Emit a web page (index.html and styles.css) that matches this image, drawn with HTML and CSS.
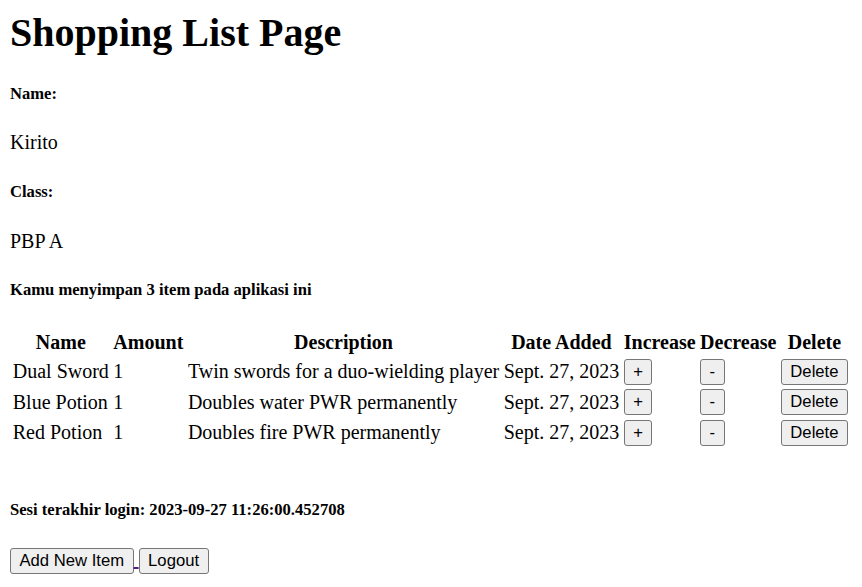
FILE: index.html
```html
<!DOCTYPE html>
<html>
<head>
<meta charset="utf-8">
<title>Shopping List Page</title>
<link rel="stylesheet" href="styles.css">
</head>
<body>
<h1 class="title">Shopping List Page</h1>
<h5 class="label">Name:</h5>
<p class="value">Kirito</p>
<h5 class="label">Class:</h5>
<p class="value">PBP A</p>
<h5 class="label">Kamu menyimpan 3 item pada aplikasi ini</h5>
<table class="items">
<tr>
<th>Name</th>
<th>Amount</th>
<th>Description</th>
<th>Date Added</th>
<th>Increase</th>
<th>Decrease</th>
<th>Delete</th>
</tr>
<tr>
<td>Dual Sword</td>
<td>1</td>
<td>Twin swords for a duo-wielding player</td>
<td>Sept. 27, 2023</td>
<td><button class="btn">+</button></td>
<td><button class="btn">-</button></td>
<td><button class="btn">Delete</button></td>
</tr>
<tr>
<td>Blue Potion</td>
<td>1</td>
<td>Doubles water PWR permanently</td>
<td>Sept. 27, 2023</td>
<td><button class="btn">+</button></td>
<td><button class="btn">-</button></td>
<td><button class="btn">Delete</button></td>
</tr>
<tr>
<td>Red Potion</td>
<td>1</td>
<td>Doubles fire PWR permanently</td>
<td>Sept. 27, 2023</td>
<td><button class="btn">+</button></td>
<td><button class="btn">-</button></td>
<td><button class="btn">Delete</button></td>
</tr>
</table>
<br>
<h5 class="label">Sesi terakhir login: 2023-09-27 11:26:00.452708</h5>
<a class="link" href="#"><button class="btn">Add New Item</button> </a><a class="link" href="#"><button class="btn">Logout</button></a>
</body>
</html>
```
FILE: styles.css
```css
html {
  background: #fff;
}
body {
  margin: 0 10px;
  font-family: "Liberation Serif", "Times New Roman", serif;
  font-size: 20px;
  color: #000;
}
.title {
  font-size: 40px;
  font-weight: bold;
  margin: 9px 0 26.8px;
}
.label {
  font-size: 16.6px;
  font-weight: bold;
  margin: 27.7px 0;
}
.value {
  margin: 20px 0;
}
.items {
  border-spacing: 2.5px;
  margin-left: -0.5px;
}
.items th,
.items td {
  padding: 1.25px;
}
.items th {
  font-weight: bold;
  text-align: center;
}
.items td {
  text-align: left;
}
.btn {
  font-family: "Liberation Sans", Arial, sans-serif;
  font-size: 16.67px;
  padding: 1.25px 8.5px;
  margin: 0;
  color: #000;
  background: #efefef;
  border: 1px solid #767676;
  border-radius: 3px;
  height: 26px;
}
.link {
  color: #551a8b;
  text-decoration: underline;
}
```
